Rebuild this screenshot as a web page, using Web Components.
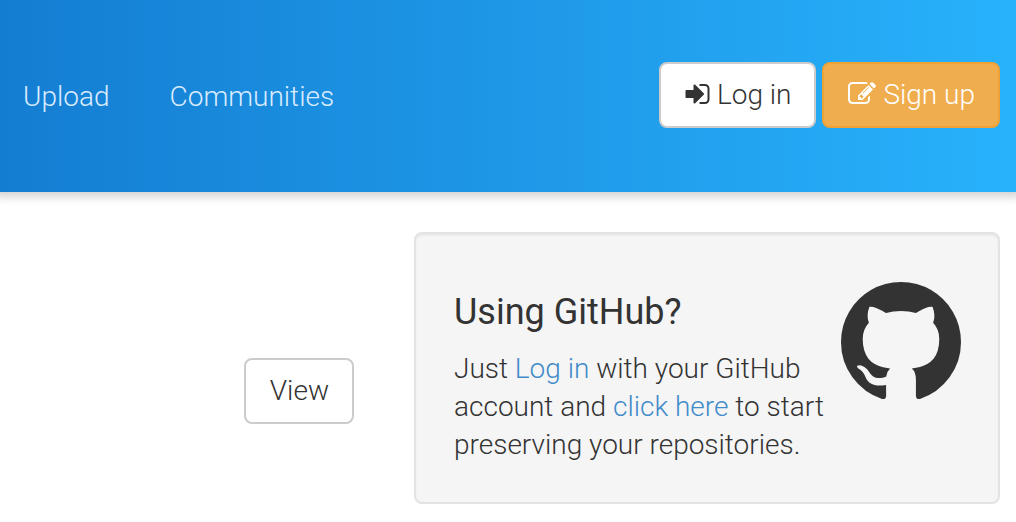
<!DOCTYPE html>
<html lang="en">
<head>
<meta charset="utf-8">
<meta name="viewport" content="width=device-width, initial-scale=1">
<title>Using GitHub?</title>
<style>
  body { margin: 0; background: #fff; color: #333; font: 300 28px/38px Roboto, "Liberation Sans", sans-serif; }
</style>
</head>
<body>
<app-header>
  <nav-link href="#upload">Upload</nav-link>
  <nav-link href="#communities">Communities</nav-link>
  <app-button slot="actions" icon="login">Log in</app-button>
  <app-button slot="actions" icon="edit" kind="warning">Sign up</app-button>
</app-header>
<app-main>
  <app-button slot="content">View</app-button>
  <github-panel slot="aside"></github-panel>
</app-main>
<script>
const define = (name, html, setup) => {
  const template = document.createElement('template');
  template.innerHTML = html;
  customElements.define(name, class extends HTMLElement {
    constructor() {
      super();
      this.attachShadow({ mode: 'open' }).append(template.content.cloneNode(true));
    }
    connectedCallback() { if (setup) setup(this); }
  });
};

const icons = {
  login: '<svg width="25" height="28" viewBox="128 0 1536 1792" aria-hidden="true"><path d="M1312 896q0 26-19 45l-544 544q-19 19-45 19t-45-19-19-45v-288h-448q-26 0-45-19t-19-45v-384q0-26 19-45t45-19h448v-288q0-26 19-45t45-19 45 19l544 544q19 19 19 45zm352-352v704q0 119-84.5 203.5t-203.5 84.5h-320q-13 0-22.5-9.5t-9.5-22.5q0-4-1-20t-.5-26.5 3-23.5 10-19.5 20.5-6.5h320q66 0 113-47t47-113v-704q0-66-47-113t-113-47h-312l-11.5-1-11.5-3-8-5.5-7-9-2-13.5q0-4-1-20t-.5-26.5 3-23.5 10-19.5 20.5-6.5h320q119 0 203.5 84.5t84.5 203.5z"/></svg>',
  edit: '<svg width="28" height="28" viewBox="0 0 1792 1792" aria-hidden="true"><path d="M888 1184l116-116-152-152-116 116v56h96v96h56zm440-720q-16-16-33 1l-350 350q-17 17-1 33t33-1l350-350q17-17 1-33zm80 594v190q0 119-84.5 203.5t-203.5 84.5h-832q-119 0-203.5-84.5t-84.5-203.5v-832q0-119 84.5-203.5t203.5-84.5h832q63 0 117 25 15 7 18 23 3 17-9 29l-49 49q-14 14-32 8-23-6-45-6h-832q-66 0-113 47t-47 113v832q0 66 47 113t113 47h832q66 0 113-47t47-113v-126q0-13 9-22l64-64q15-15 35-7t20 29zm-96-738l288 288-672 672h-288v-288zm444 132l-92 92-288-288 92-92q28-28 68-28t68 28l152 152q28 28 28 68t-28 68z"/></svg>'
};

define('nav-link', `
<style>
  :host { display: block; }
  a { color: #d9ebff; text-decoration: none; }
</style>
<a><slot></slot></a>`, el => {
  el.shadowRoot.querySelector('a').href = el.getAttribute('href');
});

define('app-button', `
<style>
  :host { display: block; }
  button { display: flex; align-items: center; gap: 7px; margin: 0; padding: 12px 23px 12px 24px; font: inherit; color: #333; background: #fff; border: 2px solid #ccc; border-radius: 8px; cursor: pointer; white-space: nowrap; }
  :host([kind="warning"]) button { color: #fff; background: #f0ad4e; border-color: #eea236; }
  svg { display: block; margin-top: -2px; fill: currentColor; }
</style>
<button type="button"><slot></slot></button>`, el => {
  const icon = icons[el.getAttribute('icon')];
  const button = el.shadowRoot.querySelector('button');
  if (icon && !button.querySelector('svg')) button.insertAdjacentHTML('afterbegin', icon);
});

define('app-header', `
<style>
  :host { display: block; }
  header { display: flex; align-items: center; justify-content: space-between; box-sizing: border-box; min-height: 192px; padding: 0 16px 2px 23px; background: linear-gradient(90deg, #147dd2, #28b2fc); box-shadow: 0 -4px 10px 8px rgba(0, 0, 0, .2); }
  nav { display: flex; gap: 60px; padding-top: 4px; }
  .actions { display: flex; gap: 6px; }
</style>
<header>
  <nav aria-label="Main"><slot></slot></nav>
  <div class="actions"><slot name="actions"></slot></div>
</header>`);

define('app-main', `
<style>
  :host { display: block; }
  main { display: grid; grid-template-columns: 338fr 586fr; gap: 60px; padding: 40px 16px 18px; }
  .content { display: flex; align-items: center; justify-content: flex-end; padding-top: 46px; }
  aside { min-width: 0; }
</style>
<main>
  <div class="content"><slot name="content"></slot></div>
  <aside><slot name="aside"></slot></aside>
</main>`);

define('github-panel', `
<style>
  :host { display: block; }
  section { display: flex; gap: 6px; padding: 38px 37px 38px 38px; background: #f5f5f5; border: 2px solid #e3e3e3; border-radius: 8px; box-shadow: inset 0 2px 2px rgba(0, 0, 0, .05); }
  .text { flex: 1; min-width: 0; }
  h4 { margin: 20px 0 18px; font-size: 36px; font-weight: 400; line-height: 40px; }
  p { margin: 0; }
  a { color: #428bca; text-decoration: none; }
  svg { flex: none; margin-top: 10px; fill: #333; }
</style>
<section>
  <div class="text">
    <h4>Using GitHub?</h4>
    <p>Just <a href="#login">Log in</a> with your GitHub account and <a href="#github">click here</a> to start preserving your repositories.</p>
  </div>
  <svg width="120" height="120" viewBox="128 128 1536 1536" aria-hidden="true"><path d="M1664 896q0 251-146.5 451.5t-378.5 277.5q-27 5-39.5-7t-12.5-30v-211q0-97-52-142 57-6 102.5-18t94-39 81-66.5 53-105 20.5-150.5q0-121-79-206 37-91-8-204-28-9-81 11t-92 44l-38 24q-93-26-192-26t-192 26q-16-11-42.5-27t-83.5-38.5-86-13.5q-44 113-7 204-79 85-79 206 0 85 20.5 150t52.5 105 80.5 67 94 39 102.5 18q-40 36-49 103-21 10-45 15t-57 5-65.5-21.5-55.5-62.5q-19-32-48.5-52t-49.5-24l-20-3q-21 0-29 4.5t-5 11.5 9 14 13 12l7 5q22 10 43.5 38t31.5 51l10 23q13 38 44 61.5t67 30 69.5 7 55.5-3.5l23-4q0 38 .5 89t.5 54q0 18-13 30t-40 7q-232-77-378.5-277.5t-146.5-451.5q0-209 103-385.5t279.5-279.5 385.5-103 385.5 103 279.5 279.5 103 385.5z"/></svg>
</section>`);
</script>
</body>
</html>
